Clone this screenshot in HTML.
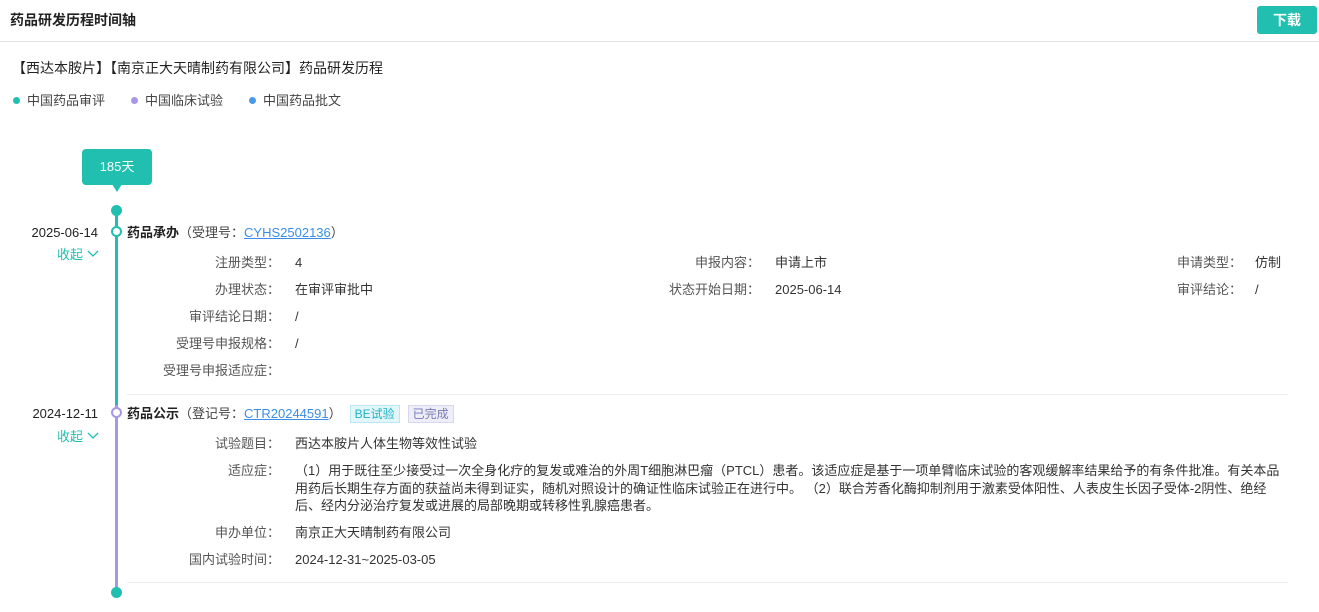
<!DOCTYPE html>
<html><head><meta charset="utf-8"><style>
*{margin:0;padding:0;box-sizing:border-box}
body{width:1319px;height:612px;overflow:hidden;background:#fff;font-family:"Liberation Sans","Noto Sans CJK SC",sans-serif;font-size:13px;line-height:18px;color:#333;position:relative}
.a{position:absolute;white-space:nowrap}
.r{text-align:right}
.lbl{color:#555}
a{color:#3a8ee6;text-decoration:underline}
.dot{display:inline-block;width:7px;height:7px;border-radius:50%;margin-right:7px;vertical-align:1px}
.tag{display:inline-block;height:18px;padding:0 4px;line-height:16px;font-size:12px;vertical-align:top;margin-left:8px}
</style></head><body>
<div class="a" style="left:10px;top:11px;font-size:14px;font-weight:bold;color:#222">药品研发历程时间轴</div>
<div class="a" style="left:1257px;top:6px;width:60px;height:28px;background:#20bfb0;border-radius:3px;color:#fff;font-weight:bold;font-size:14px;text-align:center;line-height:28px">下载</div>
<div class="a" style="left:0;top:41px;width:1319px;height:1px;background:#e6e6e6"></div>
<div class="a" style="left:12px;top:59px;font-size:14px;color:#222">【西达本胺片】【南京正大天晴制药有限公司】药品研发历程</div>
<div class="a" style="left:13px;top:92px;color:#444"><span class="dot" style="background:#20bfb0"></span>中国药品审评</div>
<div class="a" style="left:131px;top:92px;color:#444"><span class="dot" style="background:#a897e6"></span>中国临床试验</div>
<div class="a" style="left:249px;top:92px;color:#444"><span class="dot" style="background:#4a9be6"></span>中国药品批文</div>

<div class="a" style="left:82px;top:149px;width:70px;height:36px;background:#20bfb0;border-radius:4px;color:#fff;text-align:center;line-height:36px;font-size:13px">185天</div>
<div class="a" style="left:112px;top:184px;width:0;height:0;border-left:5px solid transparent;border-right:5px solid transparent;border-top:8px solid #20bfb0"></div>
<div class="a" style="left:111px;top:205px;width:11px;height:11px;border-radius:50%;background:#20bfb0"></div>
<div class="a" style="left:115px;top:210px;width:3px;height:195px;background:#20bfb0"></div>
<div class="a" style="left:115px;top:405px;width:3px;height:185px;background:#a897e6"></div>
<div class="a" style="left:111px;top:587px;width:11px;height:11px;border-radius:50%;background:#20bfb0"></div>
<div class="a" style="left:111px;top:226px;width:11px;height:11px;border-radius:50%;background:#fff;border:2px solid #20bfb0"></div>
<div class="a" style="left:111px;top:407px;width:11px;height:11px;border-radius:50%;background:#fff;border:2px solid #a897e6"></div>

<div class="a r" style="left:0;width:98px;top:224px;color:#222">2025-06-14</div>
<div class="a" style="left:57px;top:246px;color:#20bfb0">收起 <svg width="12" height="8" viewBox="0 0 12 8" style="vertical-align:1px"><path d="M1 1l5 5 5-5" fill="none" stroke="#20bfb0" stroke-width="1.3"/></svg></div>
<div class="a" style="left:127px;top:224px"><b style="color:#222">药品承办</b><span style="color:#444">（受理号：<a>CYHS2502136</a>）</span></div>

<div class="a r lbl" style="left:100px;width:180px;top:254px">注册类型：</div><div class="a" style="left:295px;top:254px">4</div>
<div class="a r lbl" style="left:560px;width:200px;top:254px">申报内容：</div><div class="a" style="left:775px;top:254px">申请上市</div>
<div class="a r lbl" style="left:1040px;width:202px;top:254px">申请类型：</div><div class="a" style="left:1255px;top:254px">仿制</div>
<div class="a r lbl" style="left:100px;width:180px;top:281px">办理状态：</div><div class="a" style="left:295px;top:281px">在审评审批中</div>
<div class="a r lbl" style="left:560px;width:200px;top:281px">状态开始日期：</div><div class="a" style="left:775px;top:281px">2025-06-14</div>
<div class="a r lbl" style="left:1040px;width:202px;top:281px">审评结论：</div><div class="a" style="left:1255px;top:281px">/</div>
<div class="a r lbl" style="left:100px;width:180px;top:308px">审评结论日期：</div><div class="a" style="left:295px;top:308px">/</div>
<div class="a r lbl" style="left:100px;width:180px;top:335px">受理号申报规格：</div><div class="a" style="left:295px;top:335px">/</div>
<div class="a r lbl" style="left:100px;width:180px;top:362px">受理号申报适应症：</div>
<div class="a" style="left:127px;top:394px;width:1161px;height:1px;background:#ececec"></div>

<div class="a r" style="left:0;width:98px;top:405px;color:#222">2024-12-11</div>
<div class="a" style="left:57px;top:428px;color:#20bfb0">收起 <svg width="12" height="8" viewBox="0 0 12 8" style="vertical-align:1px"><path d="M1 1l5 5 5-5" fill="none" stroke="#20bfb0" stroke-width="1.3"/></svg></div>
<div class="a" style="left:127px;top:405px"><b style="color:#222">药品公示</b><span style="color:#444">（登记号：<a>CTR20244591</a>）</span><span class="tag" style="background:#e3f7fa;border:1px solid #b8e8f0;color:#1fb1c6">BE试验</span><span class="tag" style="background:#eeeef8;border:1px solid #d6d6ee;color:#7a7ab8">已完成</span></div>
<div class="a r lbl" style="left:100px;width:180px;top:435px">试验题目：</div><div class="a" style="left:295px;top:435px">西达本胺片人体生物等效性试验</div>
<div class="a r lbl" style="left:100px;width:180px;top:462px">适应症：</div>
<div class="a" style="left:295px;top:462px;width:992px;white-space:normal;line-height:17.5px">（1）用于既往至少接受过一次全身化疗的复发或难治的外周T细胞淋巴瘤（PTCL）患者。该适应症是基于一项单臂临床试验的客观缓解率结果给予的有条件批准。有关本品用药后长期生存方面的获益尚未得到证实，随机对照设计的确证性临床试验正在进行中。 （2）联合芳香化酶抑制剂用于激素受体阳性、人表皮生长因子受体-2阴性、绝经后、经内分泌治疗复发或进展的局部晚期或转移性乳腺癌患者。</div>
<div class="a r lbl" style="left:100px;width:180px;top:524px">申办单位：</div><div class="a" style="left:295px;top:524px">南京正大天晴制药有限公司</div>
<div class="a r lbl" style="left:100px;width:180px;top:551px">国内试验时间：</div><div class="a" style="left:295px;top:551px">2024-12-31~2025-03-05</div>
<div class="a" style="left:127px;top:582px;width:1161px;height:1px;background:#ececec"></div>
</body></html>
